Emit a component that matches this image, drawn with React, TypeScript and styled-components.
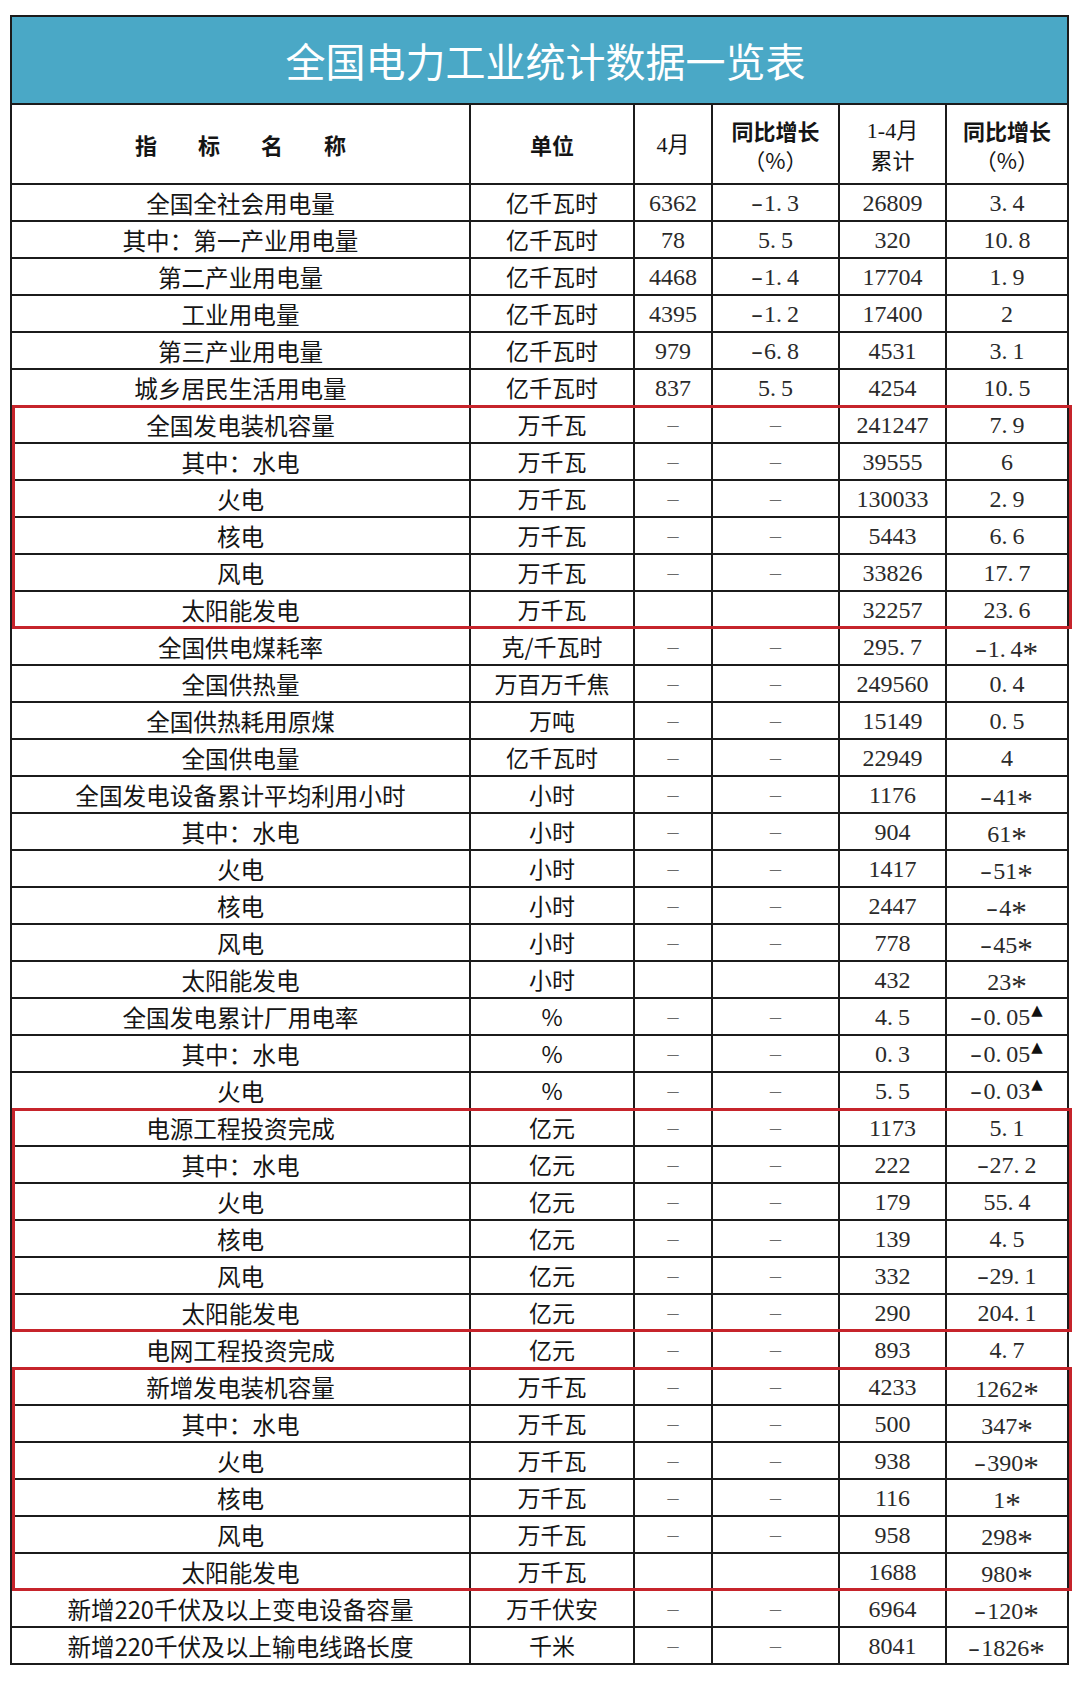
import React from 'react';
import styled, { createGlobalStyle } from 'styled-components';

const GlobalStyle = createGlobalStyle`
  html, body {
    margin: 0;
    padding: 0;
    background: #ffffff;
  }
  body {
    font-family: "Noto Sans CJK SC", "Noto Sans", sans-serif;
    color: #151515;
  }
`;

const SANS = `"Noto Sans CJK SC", "Noto Sans", sans-serif`;
const SERIF = `"Liberation Serif", "Noto Sans CJK SC", serif`;
const LINE = '#1b1b1b';

const Page = styled.div`
  width: 1080px;
  height: 1682px;
  padding: 15px 11px 0 10px;
  box-sizing: border-box;
`;

const Sheet = styled.div`
  width: 1059px;
  border: 2px solid ${LINE};
  box-sizing: border-box;
`;

const TitleBand = styled.div`
  height: 88px;
  background: #4aa8c6;
  border-bottom: 2px solid ${LINE};
  box-sizing: border-box;
  display: flex;
  align-items: center;
  justify-content: center;
  color: #ffffff;
  font-family: ${SANS};
  font-size: 40px;
  font-weight: 400;
  letter-spacing: 0;
  padding-left: 12px;
`;

const Row = styled.div<{ $head?: boolean; $last?: boolean }>`
  display: grid;
  grid-template-columns: 459px 164px 78px 127px 107px 1fr;
  height: ${(p) => (p.$head ? 80 : p.$last ? 35 : 37)}px;
  border-bottom: ${(p) => (p.$last ? 'none' : `2px solid ${LINE}`)};
  box-sizing: border-box;
`;

const Cell = styled.div<{ $serif?: boolean; $size?: number }>`
  display: flex;
  flex-direction: column;
  align-items: center;
  justify-content: center;
  border-right: 2px solid ${LINE};
  font-family: ${(p) => (p.$serif ? SERIF : SANS)};
  font-size: ${(p) => p.$size ?? (p.$serif ? 24 : 23)}px;
  font-weight: 400;
  color: ${(p) => (p.$serif ? '#2a2a2a' : '#151515')};
  line-height: 1.2;
  white-space: nowrap;
  padding-top: 1px;

  &:last-child {
    border-right: none;
  }
`;

const HeadLine = styled.span<{ $bold?: boolean; $serif?: boolean }>`
  font-family: ${(p) => (p.$serif ? SERIF : SANS)};
  font-size: 22px;
  font-weight: ${(p) => (p.$bold ? 700 : 400)};
  line-height: 29px;
  color: #151515;
`;

const Spaced = styled.span`
  font-size: 22px;
  font-weight: 700;
  letter-spacing: 41px;
  margin-right: -41px;
`;

const Group = styled.div`
  position: relative;

  &::after {
    content: '';
    position: absolute;
    top: -2px;
    bottom: 0;
    left: 0;
    right: -5px;
    border: 3px solid #c6242b;
    pointer-events: none;
  }
`;

const Dash = styled.span`
  font-family: ${SERIF};
  color: #6a6a6a;
  font-size: 22px;
`;

const Dot = styled.span`
  display: inline-block;
  width: 0.45em;
`;

const Minus = styled.span`
  display: inline-block;
  transform: scaleX(1.5);
  margin: 0 3px 0 1px;
`;

const Star = styled.span`
  display: inline-block;
  font-size: 1.3em;
  line-height: 1;
  transform: translateY(0.22em);
`;

const Tri = styled.span`
  font-family: "DejaVu Sans", sans-serif;
  font-size: 0.62em;
  vertical-align: 0.65em;
  margin-left: 1px;
  color: #111;
`;

const Num: React.FC<{ v: string }> = ({ v }) => {
  if (v === '–') return <Dash>–</Dash>;
  return (
    <span>
      {v.split('').map((ch, i) => {
        if (ch === '.') return <Dot key={i}>.</Dot>;
        if (ch === '-') return <Minus key={i}>-</Minus>;
        if (ch === '*') return <Star key={i}>*</Star>;
        if (ch === '▲') return <Tri key={i}>▲</Tri>;
        return <React.Fragment key={i}>{ch}</React.Fragment>;
      })}
    </span>
  );
};

type Item = [string, string, string, string, string, string];

const D = '–';

const rows: Item[] = [
  ['全国全社会用电量', '亿千瓦时', '6362', '-1.3', '26809', '3.4'],
  ['其中：第一产业用电量', '亿千瓦时', '78', '5.5', '320', '10.8'],
  ['第二产业用电量', '亿千瓦时', '4468', '-1.4', '17704', '1.9'],
  ['工业用电量', '亿千瓦时', '4395', '-1.2', '17400', '2'],
  ['第三产业用电量', '亿千瓦时', '979', '-6.8', '4531', '3.1'],
  ['城乡居民生活用电量', '亿千瓦时', '837', '5.5', '4254', '10.5'],
  ['全国发电装机容量', '万千瓦', D, D, '241247', '7.9'],
  ['其中：水电', '万千瓦', D, D, '39555', '6'],
  ['火电', '万千瓦', D, D, '130033', '2.9'],
  ['核电', '万千瓦', D, D, '5443', '6.6'],
  ['风电', '万千瓦', D, D, '33826', '17.7'],
  ['太阳能发电', '万千瓦', '', '', '32257', '23.6'],
  ['全国供电煤耗率', '克/千瓦时', D, D, '295.7', '-1.4*'],
  ['全国供热量', '万百万千焦', D, D, '249560', '0.4'],
  ['全国供热耗用原煤', '万吨', D, D, '15149', '0.5'],
  ['全国供电量', '亿千瓦时', D, D, '22949', '4'],
  ['全国发电设备累计平均利用小时', '小时', D, D, '1176', '-41*'],
  ['其中：水电', '小时', D, D, '904', '61*'],
  ['火电', '小时', D, D, '1417', '-51*'],
  ['核电', '小时', D, D, '2447', '-4*'],
  ['风电', '小时', D, D, '778', '-45*'],
  ['太阳能发电', '小时', '', '', '432', '23*'],
  ['全国发电累计厂用电率', '%', D, D, '4.5', '-0.05▲'],
  ['其中：水电', '%', D, D, '0.3', '-0.05▲'],
  ['火电', '%', D, D, '5.5', '-0.03▲'],
  ['电源工程投资完成', '亿元', D, D, '1173', '5.1'],
  ['其中：水电', '亿元', D, D, '222', '-27.2'],
  ['火电', '亿元', D, D, '179', '55.4'],
  ['核电', '亿元', D, D, '139', '4.5'],
  ['风电', '亿元', D, D, '332', '-29.1'],
  ['太阳能发电', '亿元', D, D, '290', '204.1'],
  ['电网工程投资完成', '亿元', D, D, '893', '4.7'],
  ['新增发电装机容量', '万千瓦', D, D, '4233', '1262*'],
  ['其中：水电', '万千瓦', D, D, '500', '347*'],
  ['火电', '万千瓦', D, D, '938', '-390*'],
  ['核电', '万千瓦', D, D, '116', '1*'],
  ['风电', '万千瓦', D, D, '958', '298*'],
  ['太阳能发电', '万千瓦', '', '', '1688', '980*'],
  ['新增220千伏及以上变电设备容量', '万千伏安', D, D, '6964', '-120*'],
  ['新增220千伏及以上输电线路长度', '千米', D, D, '8041', '-1826*'],
];

// index ranges (inclusive) framed in red
const groups: [number, number][] = [
  [6, 11],
  [25, 30],
  [32, 37],
];

const DataRow: React.FC<{ item: Item; last?: boolean }> = ({ item, last }) => (
  <Row $last={last}>
    <Cell $size={23.6}>{item[0]}</Cell>
    <Cell>{item[1]}</Cell>
    {item.slice(2).map((v, i) => (
      <Cell key={i} $serif>
        {v && <Num v={v} />}
      </Cell>
    ))}
  </Row>
);

const App: React.FC = () => {
  const blocks: React.ReactNode[] = [];
  let i = 0;
  while (i < rows.length) {
    const g = groups.find(([s]) => s === i);
    if (g) {
      const [s, e] = g;
      blocks.push(
        <Group key={`g${s}`}>
          {rows.slice(s, e + 1).map((r, k) => (
            <DataRow key={k} item={r} />
          ))}
        </Group>
      );
      i = e + 1;
    } else {
      blocks.push(<DataRow key={i} item={rows[i]} last={i === rows.length - 1} />);
      i++;
    }
  }

  return (
    <>
      <GlobalStyle />
      <Page>
        <Sheet>
          <TitleBand>全国电力工业统计数据一览表</TitleBand>
          <Row $head>
            <Cell>
              <Spaced>指标名称</Spaced>
            </Cell>
            <Cell>
              <HeadLine $bold>单位</HeadLine>
            </Cell>
            <Cell>
              <HeadLine $serif>4月</HeadLine>
            </Cell>
            <Cell>
              <HeadLine $bold>同比增长</HeadLine>
              <HeadLine>（%）</HeadLine>
            </Cell>
            <Cell>
              <HeadLine $serif>1-4月</HeadLine>
              <HeadLine>累计</HeadLine>
            </Cell>
            <Cell>
              <HeadLine $bold>同比增长</HeadLine>
              <HeadLine>（%）</HeadLine>
            </Cell>
          </Row>
          {blocks}
        </Sheet>
      </Page>
    </>
  );
};

export default App;
